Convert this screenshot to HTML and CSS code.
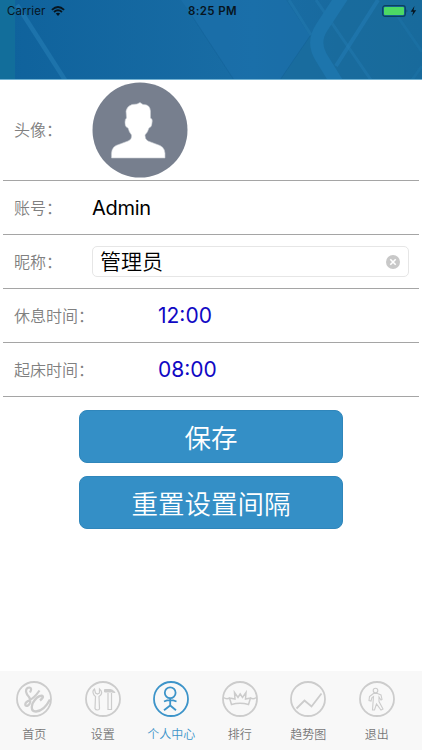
FILE: index.html
```html
<!DOCTYPE html>
<html lang="zh">

<head>
    <meta charset="UTF-8">
    <meta name="viewport" content="width=device-width, initial-scale=1.0">
    <title>个人中心</title>
    <link rel="stylesheet" href="styles.css">
</head>

<body>

    <header class="header">
        <!-- 顶部背景纹理 -->
        <svg class="header-bg" viewBox="0 0 422 80" preserveAspectRatio="none">
            <defs>
                <linearGradient id="sky" x1="0" x2="1" y1="0" y2="0">
                    <stop offset="0" stop-color="#0f629c" />
                    <stop offset="0.6" stop-color="#196da5" />
                    <stop offset="1" stop-color="#176799" />
                </linearGradient>
            </defs>
            <rect width="422" height="80" fill="url(#sky)" />
            <rect width="15" height="80" fill="#126e9b" />
            <path d="M192 16L234 80H280L310 36L286 0H181Z" fill="#1b70aa" opacity=".65" />
            <path d="M310 36L280 80H422V0H345Z" fill="#196c9d" opacity=".7" />
            <g fill="none" stroke="#2279b0">
                <path d="M17 5L65 80" stroke-width="4.5" opacity=".7" />
                <path d="M289 0L311 35M316 0L371 80" stroke-width="3" opacity=".5" />
                <path d="M378 0L336 66" stroke-width="4" opacity=".65" />
                <path d="M396 14L422 52M422 66L412 80" stroke-width="3" opacity=".3" />
                <path d="M343 -5L322 27Q312 42 321 57L337 83" stroke="#1d75ac" stroke-width="13" />
            </g>
            <path d="M192 16L234 80M310 36L280 80" fill="none" stroke="#155e94" opacity=".4" />
            <path d="M0 79.5H422" stroke="#72b2d3" />
        </svg>
        <div class="status-bar">
            <div class="status-left">
                <span>Carrier</span>
                <svg width="14" height="10" viewBox="0 0 14 10">
                    <path d="M.9 3.8Q7-1.8 13.1 3.8M3 6Q7 2.5 11 6" fill="none" stroke="#07151f" stroke-width="1.8" />
                    <path d="M4.8 7.6Q7 5.8 9.2 7.6L7 10Z" fill="#07151f" />
                </svg>
            </div>
            <div class="status-time">8:25 PM</div>
            <div class="status-right">
                <svg width="36" height="12" viewBox="0 0 36 12">
                    <rect x=".7" y=".7" width="22.6" height="10.6" rx="2.4" fill="none" stroke="#0b405f" stroke-width="1.2" />
                    <rect x="2" y="2" width="20" height="8" rx="1" fill="#4cd964" />
                    <path d="M24.6 4.2Q26.2 6 24.6 7.8Z" fill="#0b405f" />
                    <path d="M32.5 1L28.7 6.7H31.2L30 11L34.2 5.2H31.5Z" fill="#07151f" />
                </svg>
            </div>
        </div>
    </header>

    <main class="profile">
        <div class="row row-avatar">
            <label>头像：</label>
            <svg class="avatar" viewBox="0 0 96 96">
                <circle cx="48" cy="48" r="47.5" fill="#777f8e" />
                <path d="M19.5 76Q18.5 66 24 63.5L36 59Q40 57.5 39.5 53Q37 50 36 46Q32.5 45 33 40Q33 37 34.5 36L34 29Q35 24 40 22.5L45 22L48 20.5L51 22.5Q58 22 58.5 29L58.5 36Q61 37 60 41Q60 45 57 46Q56 50 53 53Q53 57.5 56 59L68 63.5Q74 66 73 76Z" fill="#fff" stroke="#c6cbd2" stroke-width=".6" />
            </svg>
        </div>
        <div class="row">
            <label>账号：</label>
            <span class="account">Admin</span>
        </div>
        <div class="row">
            <label>昵称：</label>
            <div class="input-box">
                <span>管理员</span>
                <svg width="14" height="14" viewBox="0 0 14 14">
                    <circle cx="7" cy="7" r="7" fill="#c8c8c8" />
                    <path d="M4.3 4.3L9.7 9.7M9.7 4.3L4.3 9.7" stroke="#fff" stroke-width="1.6" />
                </svg>
            </div>
        </div>
        <div class="row row-time">
            <label>休息时间：</label>
            <span class="time">12:00</span>
        </div>
        <div class="row row-time">
            <label>起床时间：</label>
            <span class="time">08:00</span>
        </div>

        <div class="buttons">
            <button>保存</button>
            <button>重置设置间隔</button>
        </div>
    </main>

    <nav class="tab-bar">
        <a class="tab">
            <svg viewBox="0 0 36 36">
                <circle cx="18" cy="18" r="17" />
                <path d="M14 11.5Q16.5 7 13.5 6.500Q10 6.500 10 10.500Q10.500 13.500 13 16Q15.500 19.500 13.500 23Q11 26 9.500 24.500Q8.500 22 12 20Q18 17.500 23.500 9.500" stroke-width="2.200" />
                <path d="M24 19.500Q28.500 16 26 14.800Q21 14.500 16.500 22.500Q14 30.500 20 30.500Q28 30 34 18.500" stroke-width="2.400" />
            </svg>
            <span>首页</span>
        </a>
        <a class="tab">
            <svg viewBox="0 0 36 36">
                <circle cx="18" cy="18" r="17" />
                <path d="M9.500 8Q7 10 8.500 13Q9 14.500 10.500 15.500L10 27.500Q10.500 29 12.500 29Q14.500 29 14.500 27.500L14 15.500Q18 13 16 9.500L14.500 8V12L12.500 13L10.500 12Z" stroke-width="1.200" />
                <path d="M19.500 8.500H25Q28 8.500 30 11.500L26.500 11H19.500Z" fill="#ccc" stroke-width="1" />
                <path d="M23 12V28.500H26.500V12" stroke-width="1.200" />
            </svg>
            <span>设置</span>
        </a>
        <a class="tab active">
            <svg viewBox="0 0 36 36">
                <circle cx="18" cy="18" r="17" />
                <circle cx="17.200" cy="11.700" r="5.400" />
                <path d="M17.200 17V25M11 29.300L17.200 24.500L23 29.300M11 20.500Q17 17.800 23.500 20.500" />
            </svg>
            <span>个人中心</span>
        </a>
        <a class="tab">
            <svg viewBox="0 0 36 36">
                <circle cx="18" cy="18" r="17" />
                <path d="M1.500 16.500Q4.500 18.500 7.500 17L9.500 23.500Q18 21 26.500 23.500L28.500 17Q31.500 18.500 34.500 16.500M7.500 17L13 18L12.500 11.500L16 16.500L18.200 13L20.500 16.500L24 11.500L23.500 18L28.500 17" stroke-width="1.500" />
            </svg>
            <span>排行</span>
        </a>
        <a class="tab">
            <svg viewBox="0 0 36 36">
                <circle cx="18" cy="18" r="17" />
                <path d="M6.500 27.500L14.500 19.500L21.500 25.500L31.500 12.500" />
            </svg>
            <span>趋势图</span>
        </a>
        <a class="tab">
            <svg viewBox="0 0 36 36">
                <circle cx="18" cy="18" r="17" />
                <circle cx="16.500" cy="9.500" r="2.300" stroke-width="1.100" />
                <path d="M14.500 12.500L10.500 15.500L10 19.500L12 20L13 16.500L14.500 15.500L14 22L13.500 29H15.500L17.500 23L22 29L24 28L20 20.500V16L22 19L23 18.500L22 14L18.500 12.500Z" stroke-width="1.100" />
            </svg>
            <span>退出</span>
        </a>
    </nav>

</body>

</html>
```
FILE: styles.css
```css
* {
    box-sizing: border-box;
}

body {
    display: flex;
    flex-direction: column;
    height: 750px;
    margin: 0;
    background-color: #fff;
    font-family: Inter, "Noto Sans CJK SC", sans-serif;
    font-weight: 300;
    color: #000;
    overflow: hidden;
}

/* 顶部 */
.header {
    position: relative;
    height: 80px;
    flex-shrink: 0;
}

.header-bg {
    position: absolute;
    left: 0;
    top: 0;
    width: 100%;
    height: 100%;
}

.status-bar {
    position: relative;
    display: grid;
    grid-template-columns: 1fr auto 1fr;
    align-items: center;
    height: 22px;
    padding: 0 4px 0 7px;
    font-size: 11.5px;
    font-weight: 400;
    color: #07151f;
}

.status-left {
    display: flex;
    align-items: center;
    gap: 6px;
}

.status-left span {
    letter-spacing: 0.1px;
}

.status-time {
    font-weight: 600;
    letter-spacing: 0.4px;
}

.status-right {
    display: flex;
    justify-content: flex-end;
}

/* 资料列表 */
.profile {
    flex: 1;
    padding: 0 3px;
}

.row {
    display: flex;
    align-items: center;
    height: 54px;
    padding: 0 10px 0 11px;
    border-bottom: 1px solid #a5a5a5;
}

.row-avatar {
    height: 101px;
}

.row label {
    width: 78px;
    flex-shrink: 0;
    padding-bottom: 2px;
    font-size: 16px;
    font-weight: 350;
    color: #808080;
    white-space: nowrap;
}

.row-time label {
    width: 144px;
}

.avatar {
    width: 96px;
    height: 96px;
}

.account,
.time {
    font-size: 20px;
    font-weight: 400;
}

.account {
    letter-spacing: -0.3px;
}

.time {
    font-size: 21px;
    color: #1008c4;
}

.input-box {
    display: flex;
    align-items: center;
    justify-content: space-between;
    flex: 1;
    height: 31px;
    padding: 0 8px 0 7px;
    border: 1px solid #e6e6e6;
    border-radius: 5px;
    font-size: 21px;
    font-weight: 350;
    line-height: 29px;
}

.buttons {
    display: flex;
    flex-direction: column;
    align-items: center;
    gap: 13px;
    padding-top: 13px;
}

.buttons button {
    width: 264px;
    height: 53px;
    padding: 0;
    border: 1px solid #2f86bb;
    border-radius: 8px;
    background-color: #348fc6;
    font-family: inherit;
    font-size: 26.5px;
    font-weight: 350;
    color: #fff;
}

/* 底部导航 */
.tab-bar {
    display: flex;
    height: 79px;
    flex-shrink: 0;
    padding-right: 11px;
    background-color: #f8f8f8;
}

.tab {
    display: flex;
    flex: 1;
    flex-direction: column;
    align-items: center;
    padding-top: 10px;
    font-size: 12px;
    color: #777;
}

.tab svg {
    width: 36px;
    height: 36px;
    fill: none;
    stroke: #ccc;
    stroke-width: 1.8;
}

.tab span {
    margin-top: 9px;
    line-height: 18px;
    font-weight: 350;
}

.tab.active {
    color: #3d94c9;
}

.tab.active svg {
    stroke: #3d94c9;
}
```
